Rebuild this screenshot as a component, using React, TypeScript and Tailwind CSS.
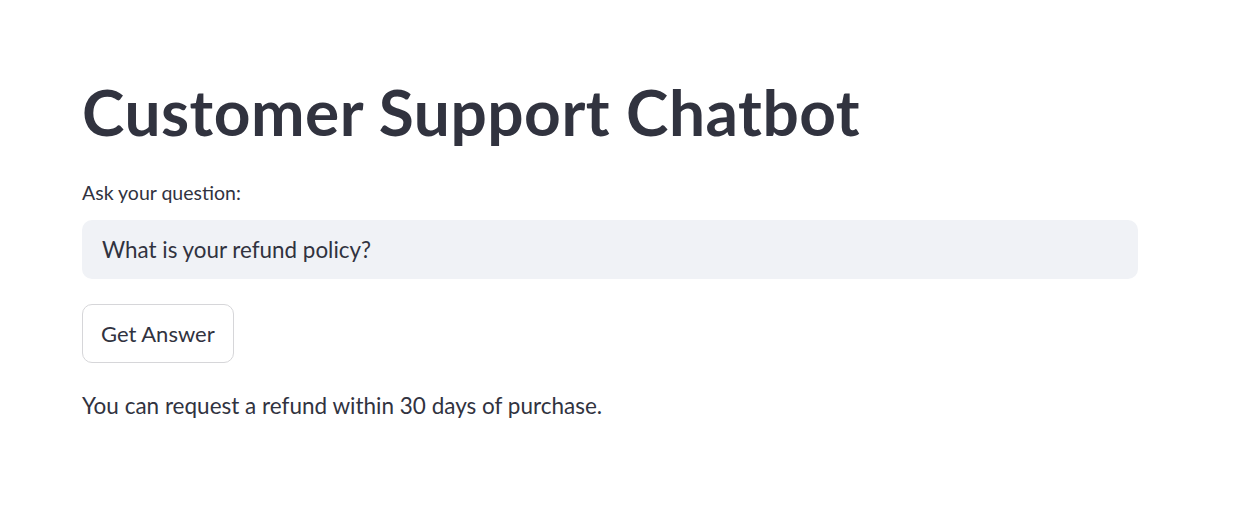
export default function App() {
  return (
    <div className="min-h-screen bg-white text-[#31333f]" style={{ fontFamily: '"Lato", "Noto Sans", sans-serif' }}>
      <div className="w-[1056px] ml-[82px] pt-[72px]">
        <h1 className="text-[64px] font-bold leading-[80px] tracking-[0.5px]">Customer Support Chatbot</h1>
        <label className="block mt-[29px] text-[19.5px] leading-[24px]">Ask your question:</label>
        <div className="mt-[15px] h-[59px] rounded-[10px] bg-[#f0f2f6] flex items-center px-[20px] text-[22.4px]">
          What is your refund policy?
        </div>
        <button className="block mt-[25px] h-[59px] px-[18px] rounded-[10px] border border-[#d6d6d9] bg-white text-[22px]">
          Get Answer
        </button>
        <p className="mt-[27px] text-[22.5px] leading-[32px]">You can request a refund within 30 days of purchase.</p>
      </div>
    </div>
  );
}
